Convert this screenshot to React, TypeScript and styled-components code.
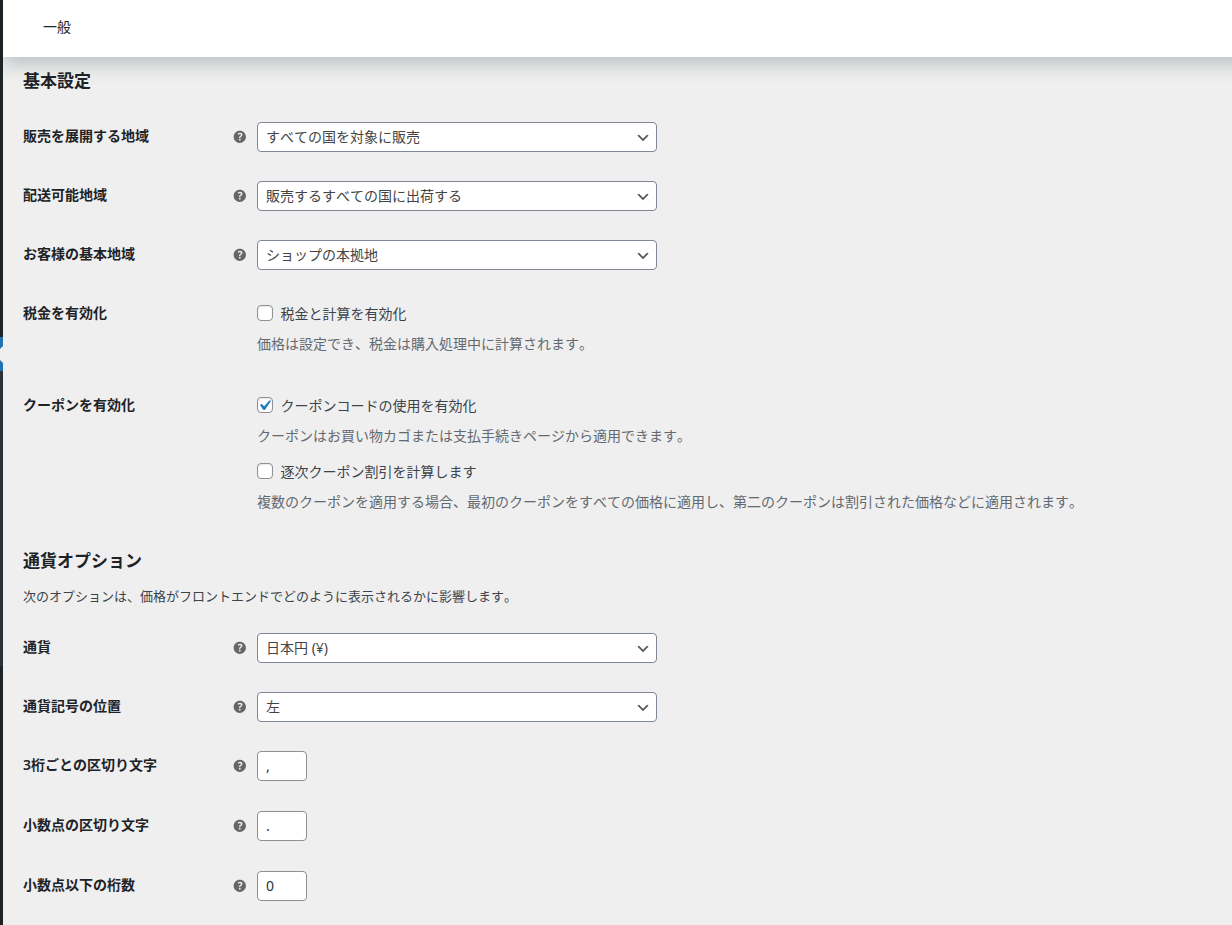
import React from 'react';
import styled, { createGlobalStyle } from 'styled-components';

const GlobalStyle = createGlobalStyle`
  *, *::before, *::after { box-sizing: border-box; }
  body {
    margin: 0;
    background: #efefef;
    color: #3c434a;
    font-family: "Noto Sans", "Noto Sans CJK JP", sans-serif;
    font-size: 13px;
    font-kerning: none;
  }
`;

const Page = styled.div`
  display: flex;
  width: 100%;
  height: 925px;
  overflow: hidden;
`;

const MenuEdge = styled.div`
  display: flex;
  flex-direction: column;
  flex: none;
  width: 3px;
  background: #1d2327;
`;

const MenuTop = styled.div`
  height: 337px;
`;

const MenuCurrent = styled.svg`
  display: block;
  width: 3px;
  height: 34px;
  background: #2271b1;
`;

const Submenu = styled.div`
  height: 295px;
  background: #2c3338;
`;

const Content = styled.main`
  flex: 1;
  min-width: 0;
  overflow: hidden;
`;

const TopBar = styled.header`
  display: flex;
  align-items: center;
  width: calc(100% + 40px);
  height: 57px;
  padding: 0 40px 3px;
  background: #fff;
  box-shadow: 0 8px 16px 0 rgba(85, 93, 102, 0.3);
`;

const PageTitle = styled.h1`
  margin: 0;
  color: #1d2327;
  font-size: 14px;
  font-weight: 400;
  line-height: 20px;
`;

const Section = styled.section<{ $top: number }>`
  padding: ${({ $top }) => $top}px 20px 0;
`;

const SectionTitle = styled.h2`
  margin: 0;
  color: #1d2327;
  font-size: 17px;
  font-weight: 600;
  line-height: 24px;
`;

const Intro = styled.p`
  margin: 13px 0 0;
  line-height: 20px;
`;

const Rows = styled.div<{ $gap: number }>`
  padding-top: ${({ $gap }) => $gap}px;
`;

const Row = styled.div<{ $height: number }>`
  display: grid;
  grid-template-columns: 208px 26px 1fr;
  align-items: start;
  height: ${({ $height }) => $height}px;
`;

const Label = styled.label`
  color: #1d2327;
  font-size: 14px;
  font-weight: 600;
  line-height: 28px;
  white-space: nowrap;
`;

const HelpIcon = styled.svg`
  display: block;
  width: 17.6px;
  height: 17.6px;
  margin: 5.7px 0 0 -0.3px;
  fill: #666;
`;

const SelectBox = styled.div`
  display: flex;
  align-items: center;
  justify-content: space-between;
  width: 400px;
  height: 30px;
  padding: 0 5px 0 8px;
  border: 1px solid #7e8993;
  border-radius: 4px;
  background: #fff;
  color: #444;
  font-size: 14px;
  line-height: 28px;
`;

const Chevron = styled.svg`
  width: 16px;
  height: 16px;
  margin-top: 1px;
  fill: #555;
`;

const TextInput = styled.input`
  display: block;
  width: 50px;
  height: 30px;
  padding: 0 8px 2px;
  border: 1px solid #8c8f94;
  border-radius: 4px;
  background: #fff;
  color: #2c3338;
  font-family: inherit;
  font-size: 14px;
  line-height: 26px;
`;

const Options = styled.div`
  display: flex;
  flex-direction: column;
  gap: 6px;
`;

const Option = styled.div`
  font-size: 14px;
`;

const CheckLine = styled.label`
  display: flex;
  align-items: center;
  gap: 7.5px;
  height: 30px;
  padding-bottom: 2px;
`;

const CheckBox = styled.span`
  display: block;
  flex: none;
  width: 16px;
  height: 16px;
  border: 1px solid #8c8f94;
  border-radius: 4px;
  background: #fff;
  box-shadow: inset 0 1px 2px rgba(0, 0, 0, 0.1);
`;

const Tick = styled.svg`
  display: block;
  width: 21px;
  height: 21px;
  margin: -3px 0 0 -4px;
  fill: #1e7cc0;
`;

const Description = styled.p`
  margin: 0;
  color: #646970;
  line-height: 30px;
  white-space: nowrap;
`;

function Help() {
  return (
    <HelpIcon viewBox="0 0 20 20">
      <path d="M17 10c0-3.87-3.14-7-7-7-3.87 0-7 3.13-7 7s3.13 7 7 7c3.86 0 7-3.13 7-7zm-6.3 1.48H9.14v-.43c0-.38.08-.7.24-.98s.46-.57.88-.89c.41-.29.68-.53.81-.71.14-.18.2-.39.2-.62 0-.25-.09-.44-.28-.58-.19-.13-.45-.19-.79-.19-.58 0-1.25.15-2 .46l-.64-1.28c.87-.49 1.8-.74 2.77-.74.81 0 1.45.2 1.92.58.48.39.71.91.71 1.55 0 .43-.09.8-.29 1.11-.19.32-.57.67-1.11 1.06-.38.28-.61.49-.71.63-.1.15-.15.34-.15.57v.46zm-1.47 2.51c-.18-.17-.27-.42-.27-.73 0-.33.08-.58.26-.75s.43-.25.77-.25c.32 0 .57.09.75.26s.27.42.27.74c0 .3-.09.55-.27.72-.18.18-.43.27-.75.27-.33 0-.58-.09-.76-.26z" />
    </HelpIcon>
  );
}

function SelectRow({ label, value, height = 59 }: { label: string; value: string; height?: number }) {
  return (
    <Row $height={height}>
      <Label>{label}</Label>
      <Help />
      <SelectBox>
        <span>{value}</span>
        <Chevron viewBox="0 0 20 20">
          <path d="M5 6l5 5 5-5 2 1-7 7-7-7 2-1z" />
        </Chevron>
      </SelectBox>
    </Row>
  );
}

function InputRow({ label, value }: { label: string; value: string }) {
  return (
    <Row $height={60}>
      <Label>{label}</Label>
      <Help />
      <TextInput defaultValue={value} />
    </Row>
  );
}

function CheckOption({ label, description, checked }: { label: string; description: string; checked?: boolean }) {
  return (
    <Option>
      <CheckLine>
        <CheckBox>
          {checked && (
            <Tick viewBox="0 0 20 20">
              <path d="M14.83 4.89l1.34.94-5.81 8.38H9.02L5.78 9.67l1.34-1.25 2.57 2.4z" />
            </Tick>
          )}
        </CheckBox>
        {label}
      </CheckLine>
      <Description>{description}</Description>
    </Option>
  );
}

export default function App() {
  return (
    <Page>
      <GlobalStyle />
      <MenuEdge>
        <MenuTop />
        <MenuCurrent viewBox="0 0 3 34">
          <path d="M3 9L0 12v11l3 3z" fill="#efefef" />
        </MenuCurrent>
        <Submenu />
      </MenuEdge>
      <Content>
        <TopBar>
          <PageTitle>一般</PageTitle>
        </TopBar>
        <Section $top={12}>
          <SectionTitle>基本設定</SectionTitle>
          <Rows $gap={29}>
            <SelectRow label="販売を展開する地域" value="すべての国を対象に販売" />
            <SelectRow label="配送可能地域" value="販売するすべての国に出荷する" />
            <SelectRow label="お客様の基本地域" value="ショップの本拠地" />
            <Row $height={92}>
              <Label>税金を有効化</Label>
              <span />
              <Options>
                <CheckOption
                  label="税金と計算を有効化"
                  description="価格は設定でき、税金は購入処理中に計算されます。"
                />
              </Options>
            </Row>
            <Row $height={126}>
              <Label>クーポンを有効化</Label>
              <span />
              <Options>
                <CheckOption
                  checked
                  label="クーポンコードの使用を有効化"
                  description="クーポンはお買い物カゴまたは支払手続きページから適用できます。"
                />
                <CheckOption
                  label="逐次クーポン割引を計算します"
                  description="複数のクーポンを適用する場合、最初のクーポンをすべての価格に適用し、第二のクーポンは割引された価格などに適用されます。"
                />
              </Options>
            </Row>
          </Rows>
        </Section>
        <Section $top={32}>
          <SectionTitle>通貨オプション</SectionTitle>
          <Intro>次のオプションは、価格がフロントエンドでどのように表示されるかに影響します。</Intro>
          <Rows $gap={27}>
            <SelectRow label="通貨" value="日本円 (¥)" />
            <SelectRow label="通貨記号の位置" value="左" />
            <InputRow label="3桁ごとの区切り文字" value="," />
            <InputRow label="小数点の区切り文字" value="." />
            <InputRow label="小数点以下の桁数" value="0" />
          </Rows>
        </Section>
      </Content>
    </Page>
  );
}
